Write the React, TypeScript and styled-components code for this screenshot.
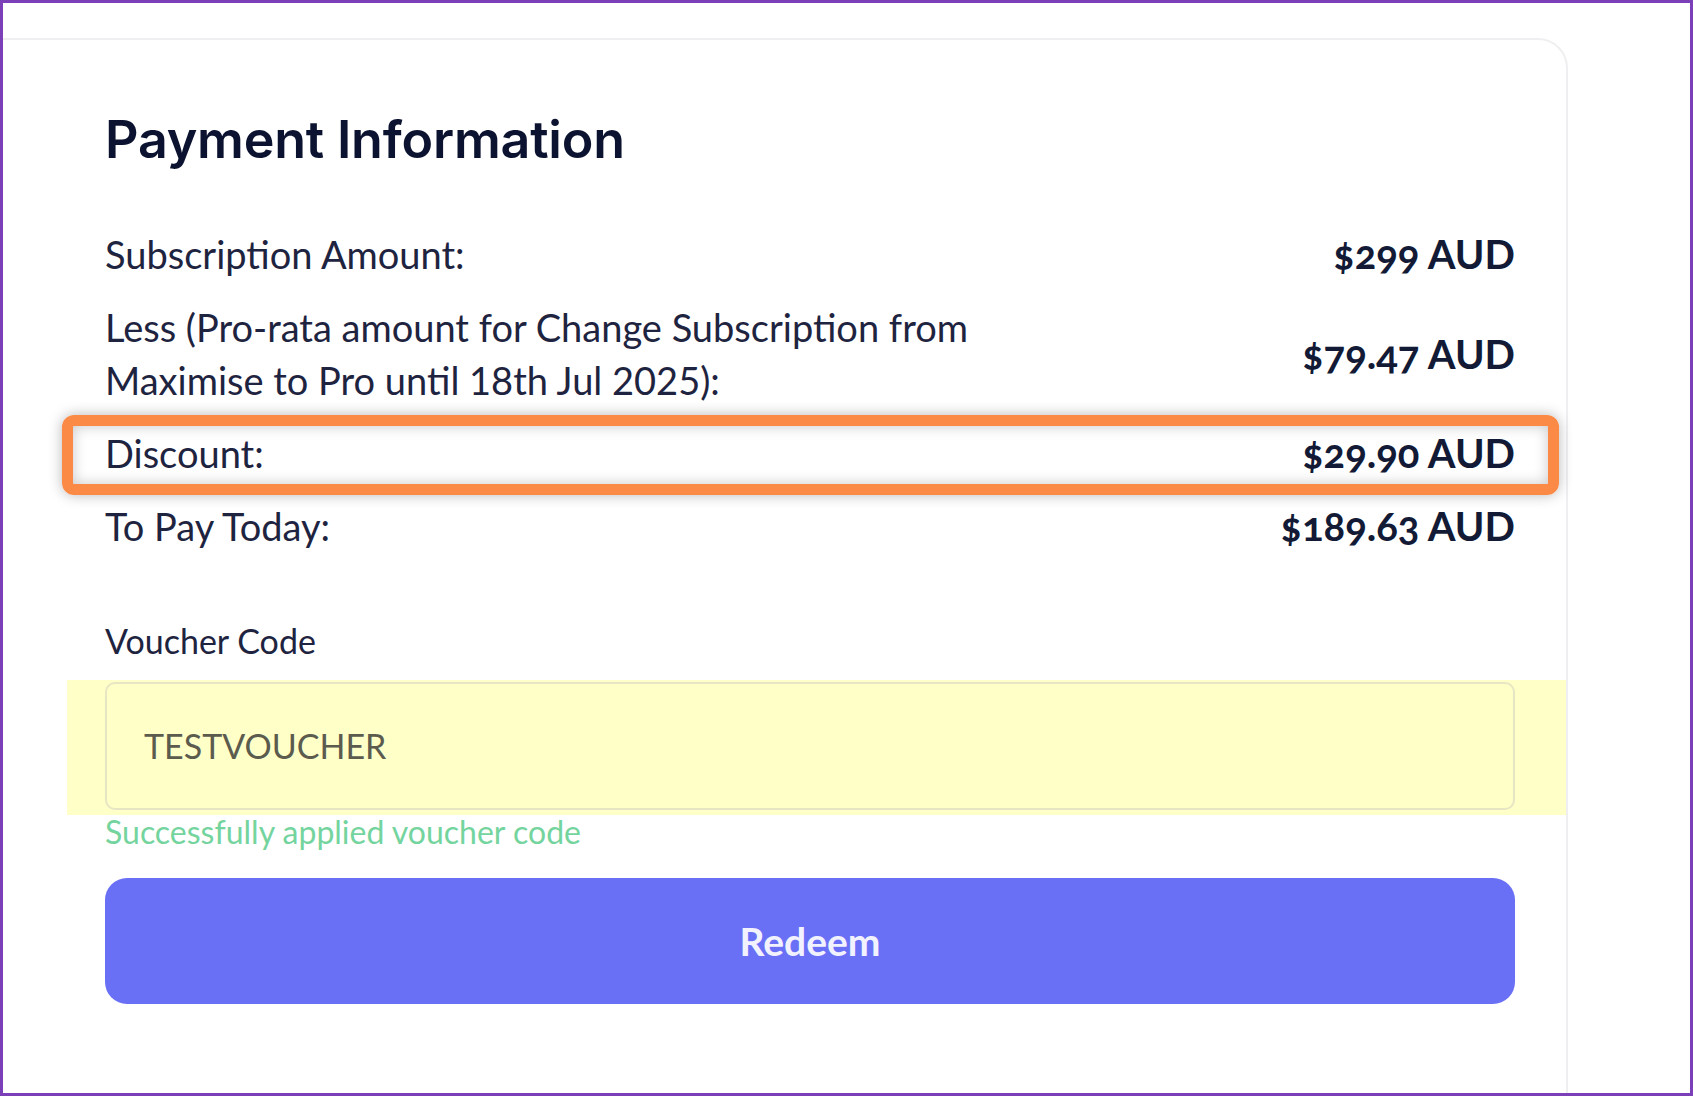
import styled, { createGlobalStyle } from "styled-components";

const GlobalStyle = createGlobalStyle`
    html, body {
        margin: 0;
        padding: 0;
        background: #ffffff;
    }
    * {
        box-sizing: border-box;
    }
`;

const rows = [
    { label: "Subscription Amount:", value: "$299 AUD" },
    { label: "Less (Pro-rata amount for Change Subscription from Maximise to Pro until 18th Jul 2025):", value: "$79.47 AUD" },
    { label: "Discount:", value: "$29.90 AUD", marked: true },
    { label: "To Pay Today:", value: "$189.63 AUD" },
];

const Frame = styled.div`
    width: 1693px;
    height: 1096px;
    border: 3px solid #7b3fb8;
    overflow: hidden;
    background: #ffffff;
    padding: 35px 122px 0 0;
`;

const Card = styled.section`
    margin-left: -30px;
    height: 1200px;
    border: 2px solid #efeff1;
    border-radius: 30px;
    background: #ffffff;
    padding: 69px 51px 0 130px;
    font-family: Lato, "Liberation Sans", sans-serif;
    color: #1a2140;
`;

const Title = styled.h1`
    margin: 0 0 57px;
    font-family: Inter, Lato, sans-serif;
    font-size: 52px;
    font-weight: 600;
    line-height: 1.2;
    letter-spacing: -0.2px;
    color: #0b1330;
`;

const Rows = styled.div`
    display: flex;
    flex-direction: column;
    gap: 20px;
`;

const Row = styled.div<{ $marked?: boolean }>`
    position: relative;
    display: flex;
    align-items: center;
    justify-content: space-between;
    font-size: 38px;
    line-height: 53px;

    &::before {
        content: "";
        display: ${(p) => (p.$marked ? "block" : "none")};
        position: absolute;
        top: -12px;
        bottom: -15px;
        left: -43px;
        right: -44px;
        border: 11px solid #fa8a45;
        border-radius: 12px;
        box-shadow: 0 0 14px rgba(0, 0, 0, 0.28), inset 0 0 14px rgba(0, 0, 0, 0.22);
        pointer-events: none;
    }
`;

const Label = styled.span`
    max-width: 65%;
    color: #1e2440;
`;

const Value = styled.span`
    font-size: 40px;
    font-weight: 700;
    color: #121a36;
    font-variant-numeric: oldstyle-nums;
    white-space: nowrap;
`;

const VoucherLabel = styled.label`
    display: block;
    margin-top: 66px;
    font-size: 34px;
    line-height: 1.3;
    color: #1e2440;
`;

const Highlight = styled.div`
    margin: 16px -51px 0 -38px;
    padding: 2px 51px 5px 38px;
    background: #ffffc8;
`;

const VoucherInput = styled.div`
    display: flex;
    align-items: center;
    height: 128px;
    padding: 0 37px;
    border: 2px solid #e6e6c4;
    border-radius: 10px;
    font-size: 34px;
    color: #5b5b4e;
`;

const Success = styled.p`
    margin: 2px 0 0;
    font-size: 32px;
    line-height: 30px;
    color: #74d49e;
`;

const RedeemButton = styled.button`
    display: block;
    width: 100%;
    height: 126px;
    margin-top: 31px;
    border: none;
    border-radius: 22px;
    background: #6a70f5;
    color: #f2f2ff;
    font-family: Lato, "Liberation Sans", sans-serif;
    font-size: 39px;
    font-weight: 700;
`;

export default function App() {
    return (
        <>
            <GlobalStyle />
            <Frame>
                <Card>
                    <Title>Payment Information</Title>
                    <Rows>
                        {rows.map((row) => (
                            <Row key={row.label} $marked={row.marked}>
                                <Label>{row.label}</Label>
                                <Value>{row.value}</Value>
                            </Row>
                        ))}
                    </Rows>
                    <VoucherLabel>Voucher Code</VoucherLabel>
                    <Highlight>
                        <VoucherInput>TESTVOUCHER</VoucherInput>
                    </Highlight>
                    <Success>Successfully applied voucher code</Success>
                    <RedeemButton>Redeem</RedeemButton>
                </Card>
            </Frame>
        </>
    );
}
